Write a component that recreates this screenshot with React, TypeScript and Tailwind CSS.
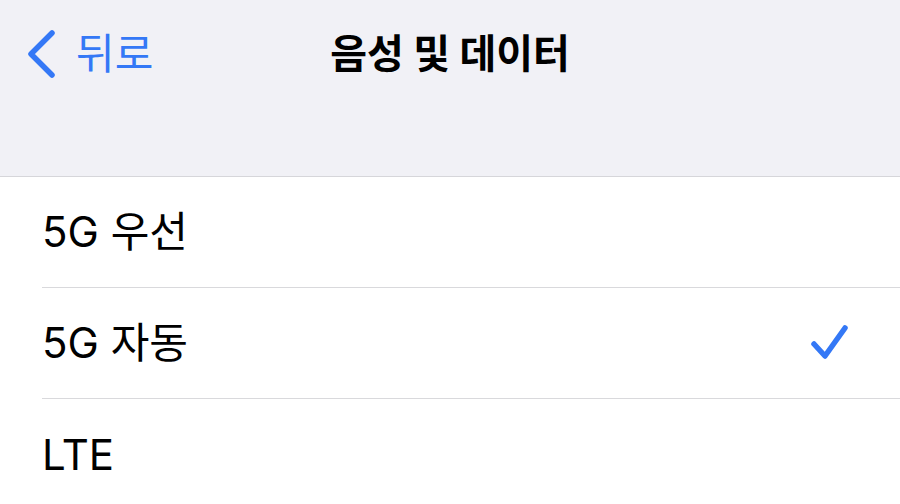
const rows = [
  { label: '5G 우선', checked: false },
  { label: '5G 자동', checked: true },
  { label: 'LTE', checked: false },
];

const font = { fontFamily: 'Inter, "Noto Sans CJK KR", sans-serif' };

export default function App() {
  return (
    <div className="w-[900px] h-[504px] overflow-hidden bg-white" style={font}>
      <div className="h-[177px] bg-[#f1f1f6] border-b border-[#d6d6da]">
        <div className="h-[108px] grid grid-cols-[1fr_auto_1fr] items-center">
          <div className="flex items-center pl-[25px] text-[#3478f6]">
            <svg width="34" height="52" viewBox="0 0 34 52" fill="none">
              <path d="M27 5 L6 26 L27 47" stroke="currentColor" strokeWidth="5.5" strokeLinecap="round" strokeLinejoin="round" />
            </svg>
            <span className="ml-[17px] text-[42px] leading-none">뒤로</span>
          </div>
          <div className="text-[40px] font-bold text-black leading-none">음성 및 데이터</div>
          <div />
        </div>
      </div>
      <div className="pl-[42px]">
        {rows.map((r, i) => (
          <div
            key={r.label}
            className={`h-[111px] flex items-center justify-between pr-[50px] ${i < rows.length - 1 ? 'border-b border-[#d9d9dc]' : ''}`}
          >
            <span className="text-[42px] text-black leading-none">{r.label}</span>
            {r.checked && (
              <svg width="40" height="40" viewBox="0 0 40 40" fill="none">
                <path d="M4 21 L15 33 L35 5" stroke="#3478f6" strokeWidth="5.5" strokeLinecap="round" strokeLinejoin="round" />
              </svg>
            )}
          </div>
        ))}
      </div>
    </div>
  );
}
